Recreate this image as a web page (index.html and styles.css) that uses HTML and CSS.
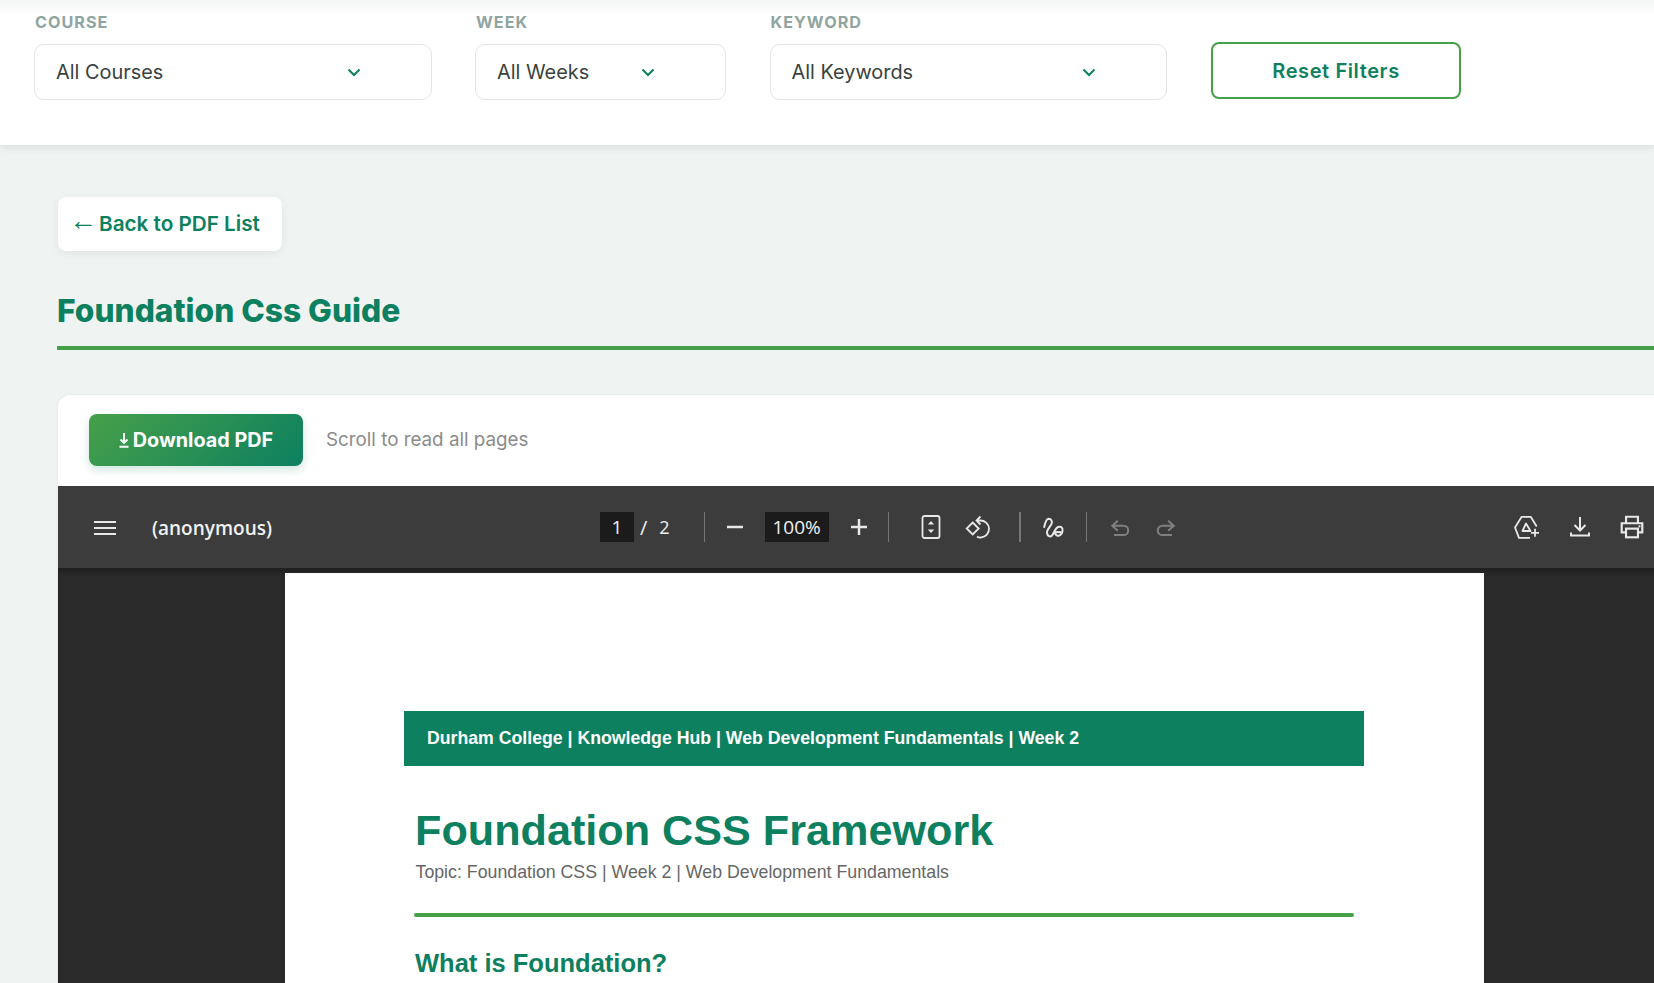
FILE: index.html
```html
<!DOCTYPE html>
<html>
<head>
	<meta charset="utf-8">
	<title>Foundation Css Guide</title>
	<link rel="stylesheet" href="styles.css">
</head>
<body>
<header class="filters">
	<div class="filter filter-course">
		<label>Course</label>
		<div class="select">All Courses
			<svg class="chevron" viewBox="0 0 14 9"><path d="M1.5 1.5 7 7l5.5-5.5"/></svg>
		</div>
	</div>
	<div class="filter filter-week">
		<label>Week</label>
		<div class="select">All Weeks
			<svg class="chevron" viewBox="0 0 14 9"><path d="M1.5 1.5 7 7l5.5-5.5"/></svg>
		</div>
	</div>
	<div class="filter filter-keyword">
		<label>Keyword</label>
		<div class="select">All Keywords
			<svg class="chevron" viewBox="0 0 14 9"><path d="M1.5 1.5 7 7l5.5-5.5"/></svg>
		</div>
	</div>
	<button class="reset">Reset Filters</button>
</header>

<main class="content">
	<a class="back" href="#"><span class="arrow">←</span>Back to PDF List</a>
	<h1 class="title">Foundation Css Guide</h1>

	<section class="card">
		<div class="card-bar">
			<a class="download" href="#">
				<svg class="dl-glyph" viewBox="0 0 10 15"><path d="M5 0v10M1.500 6.500 5 10l3.500-3.500M.5 13.800h9"/></svg>
				Download PDF
			</a>
			<span class="hint">Scroll to read all pages</span>
		</div>

		<div class="viewer">
			<div class="toolbar">
				<svg class="ico menu" viewBox="0 0 24 24"><path d="M1 18h22M1 12h22M1 6h22"/></svg>
				<span class="docname">(anonymous)</span>

				<div class="tools">
					<span class="pagebox">1</span>
					<span class="slash">/</span>
					<span class="pagecount">2</span>
					<i class="sep sep-a"></i>
					<svg class="ico minus" viewBox="0 0 24 24"><path d="M4 12h16"/></svg>
					<span class="zoombox">100%</span>
					<svg class="ico plus" viewBox="0 0 24 24"><path d="M4 12h16M12 4v16"/></svg>
					<i class="sep sep-b"></i>
					<svg class="ico fit" viewBox="0 0 24 24">
						<rect x="3.500" y="1" width="17" height="22" rx="2"/>
						<path class="solid" d="M12 6l3.200 3.600H8.800zM12 18l-3.200-3.600h6.400z"/>
					</svg>
					<svg class="ico rotate" viewBox="0 0 28 28">
						<path d="M7.700 9.500l6 6-6 6-6-6z"/>
						<path d="M12 7.500h3a8.500 8.500 0 0 1 1 17c-1.500.2-3-.2-4-1M15.500 3.500l-4 4 4 4"/>
					</svg>
					<i class="sep sep-c"></i>
					<svg class="ico draw" viewBox="0 0 24 24"><path d="M3 12.800C4 8 6 4 7.500 3.800c3 0 4 2.500 3 5C9 12 5.500 15 6 18c.5 3 3 4.500 5 2.500 2-2.500 3-7 6-8.500 3-1 5 .5 4.500 4-.5 3-3 5.500-5.500 4.500-2.500-1.200-2.500-3.500.5-3.500 1.500 0 4 .5 5.500.5"/></svg>
					<i class="sep sep-d"></i>
					<svg class="ico undo" viewBox="0 0 22 22"><path d="M8.800 4.700l-5.600 5 5.600 5M3.500 9.700h11a4.700 4.700 0 0 1 0 9.400H5"/></svg>
					<svg class="ico redo" viewBox="0 0 22 22"><path d="M13.200 4.700l5.600 5-5.600 5M18.500 9.700h-11a4.700 4.700 0 0 0 0 9.400H17"/></svg>
				</div>

				<div class="actions">
					<svg class="ico drive" viewBox="0 0 30 30">
						<path stroke-linejoin="round" d="M18 25.800H7L3 15.500 9.700 4.800h9l6 9.700"/>
						<path stroke-linejoin="round" d="M14 11.500 10.500 19H18.500z"/>
						<path d="M23 16.800v8M19 20.800h8"/>
					</svg>
					<svg class="ico save" viewBox="0 0 24 24"><path d="M12 2v13M6.500 10l5.500 5.500 5.500-5.500M3 17.500v3h18v-3"/></svg>
					<svg class="ico print" viewBox="0 0 24 24">
						<path d="M6.500 8V2.500h11V8M6.500 17H2.500V8.500h19V17h-4"/>
						<rect x="6.500" y="13.500" width="11" height="8"/>
						<path class="solid" d="M18 10.500h1.800v1.800H18z"/>
					</svg>
				</div>
			</div>

			<div class="stage">
				<article class="page">
					<div class="banner">Durham College | Knowledge Hub | Web Development Fundamentals | Week 2</div>
					<h2 class="doc-title">Foundation CSS Framework</h2>
					<p class="doc-topic">Topic: Foundation CSS | Week 2 | Web Development Fundamentals</p>
					<hr class="doc-rule">
					<h3 class="doc-heading">What is Foundation?</h3>
				</article>
			</div>
		</div>
	</section>
</main>
</body>
</html>
```

FILE: styles.css
```css
* {
  box-sizing: border-box;
}

html, body {
  margin: 0;
  height: 983px;
  overflow: hidden;
}

body {
  background: #eff4f2;
  font-family: "Inter", "Liberation Sans", sans-serif;
  color: #333;
}

/* filter bar */
.filters {
  height: 145px;
  padding: 14px 0 0 34px;
  display: flex;
  align-items: flex-start;
  background: linear-gradient(#f3f4f4, #fff 14px);
  box-shadow: 0 2px 8px rgba(0, 0, 0, .1);
}

.filter label {
  display: block;
  height: 30px;
  padding-left: 1px;
  font-size: 16.2px;
  line-height: 16px;
  font-weight: 700;
  letter-spacing: 1px;
  text-transform: uppercase;
  color: #8fa5a0;
}

.filter-course { width: 398px; margin-right: 43px; }
.filter-week { width: 250.5px; margin-right: 44px; }
.filter-keyword { width: 397.5px; margin-right: 44px; }

.select {
  height: 56px;
  padding: 0 21px;
  display: flex;
  align-items: center;
  justify-content: space-between;
  border: 1px solid #e3e6e5;
  border-radius: 10px;
  background: #fff;
  font-size: 19.9px;
  color: #3a4240;
}

.chevron {
  width: 14px;
  height: 9px;
  margin-right: 49px;
  fill: none;
  stroke: #0d8060;
  stroke-width: 2;
}

.reset {
  width: 250px;
  height: 57px;
  margin-top: 28px;
  border: 2px solid #46a049;
  border-radius: 8px;
  background: #fff;
  font-family: inherit;
  font-size: 20px;
  letter-spacing: .6px;
  font-weight: 600;
  color: #0d8060;
}

/* page content */
.content {
  width: 1710px;
  padding: 52px 0 0 58px;
}

.back {
  width: 224px;
  height: 54px;
  padding: 0 0 2px 11px;
  display: flex;
  align-items: center;
  border-radius: 8px;
  background: #fff;
  box-shadow: 0 2px 8px rgba(0, 0, 0, .07);
  font-size: 20.7px;
  font-weight: 600;
  color: #0d8060;
  text-decoration: none;
  white-space: pre;
}

.arrow {
  margin: 0 2px 4px 0;
  font-family: "Liberation Sans", sans-serif;
  font-weight: 400;
  font-size: 28px;
}

.title {
  margin: 40px 0 0 -1px;
  height: 59px;
  border-bottom: 4px solid #46a049;
  font-size: 31.7px;
  line-height: 40px;
  font-weight: 800;
  color: #0d8060;
}

.card {
  margin-top: 45px;
  border-radius: 12px 0 0 0;
  background: #fff;
  box-shadow: 0 0 3px rgba(0, 0, 0, .08);
}

.card-bar {
  height: 91px;
  padding: 19px 0 0 31px;
  display: flex;
  align-items: flex-start;
}

.download {
  width: 214px;
  height: 52px;
  display: flex;
  align-items: center;
  justify-content: center;
  gap: 4px;
  border-radius: 8px;
  background: linear-gradient(135deg, #46a049, #0d8060);
  box-shadow: 0 4px 10px rgba(13, 128, 96, .2);
  font-size: 19.8px;
  font-weight: 700;
  color: #fff;
  text-decoration: none;
}

.dl-glyph {
  width: 10px;
  height: 15px;
  fill: none;
  stroke: #fff;
  stroke-width: 1.9;
}

.hint {
  margin-left: 23px;
  font-size: 18.8px;
  line-height: 52px;
  color: #8b8b8b;
}

/* pdf viewer */
.viewer {
  background: #2a2a2a;
  font-family: "Open Sans", "Noto Sans", sans-serif;
}

.toolbar {
  height: 82px;
  display: flex;
  align-items: center;
  background: #3c3c3c;
  color: #f1f1f1;
}

.ico {
  flex: none;
  fill: none;
  stroke: #e8e8e8;
  stroke-width: 2;
}

.ico .solid {
  fill: #e8e8e8;
  stroke: none;
}

.menu { width: 24px; height: 24px; margin: 2px 0 0 35px; }

.docname {
  width: 448px;
  margin: 2px 0 0 35px;
  font-size: 19px;
  font-weight: 600;
}

.tools {
  display: flex;
  align-items: center;
}

.pagebox, .zoombox {
  height: 30px;
  display: flex;
  align-items: center;
  justify-content: center;
  background: #1b1b1b;
  font-size: 19px;
}

.pagebox { width: 34px; }
.zoombox { width: 64px; }

.slash { margin-left: 6px; font-size: 20px; }
.pagecount { margin-left: 12px; font-size: 18px; }

.sep {
  width: 1px;
  height: 30px;
  background: #777;
}

.sep-a { margin-left: 34px; }
.sep-b { margin-left: 17px; }
.sep-c { margin-left: 26px; width: 2px; }
.sep-d { margin-left: 21px; }

.minus { width: 24px; height: 24px; margin-left: 18px; stroke-width: 2.5; }
.minus + .zoombox { margin-left: 18px; }
.plus { width: 24px; height: 24px; margin-left: 18px; stroke-width: 2.5; }
.fit { width: 24px; height: 24px; margin-left: 30px; stroke-width: 1.8; }
.rotate { width: 28px; height: 28px; margin-left: 22px; stroke-width: 1.8; }
.draw { width: 24px; height: 24px; margin-left: 20px; stroke-width: 2; }
.undo { width: 22px; height: 22px; margin-left: 22px; stroke: #7f7f7f; }
.redo { width: 22px; height: 22px; margin-left: 24px; stroke: #7f7f7f; }

.actions {
  margin-left: auto;
  padding-right: 65px;
  display: flex;
  align-items: center;
  gap: 27px;
}

.drive { width: 30px; height: 30px; margin-right: -1px; stroke-width: 1.8; }
.save { width: 24px; height: 24px; }
.print { width: 26px; height: 26px; }

.stage {
  height: 500px;
  padding-top: 5px;
  padding-left: 227px;
  background: #2a2a2a;
  box-shadow: inset 0 4px 4px rgba(0, 0, 0, .25);
}

.page {
  width: 1198.5px;
  height: 600px;
  padding: 138px 119.5px 0 119px;
  background: #fff;
  font-family: "Liberation Sans", Arial, sans-serif;
}

.banner {
  height: 55px;
  padding-left: 23px;
  background: #0d8060;
  font-size: 17.7px;
  line-height: 55px;
  font-weight: 700;
  color: #fff;
}

.doc-title {
  margin: 39px 0 0 11px;
  font-size: 43.2px;
  line-height: 50px;
  font-weight: 700;
  color: #0d8060;
}

.doc-topic {
  margin: 7px 0 0 11.5px;
  font-size: 17.75px;
  line-height: 20px;
  color: #666;
}

.doc-rule {
  margin: 31px 10px 0;
  height: 4px;
  border: 0;
  border-radius: 2px;
  background: #46a049;
}

.doc-heading {
  margin: 31px 0 0 11px;
  padding-bottom: 5px;
  border-bottom: 1px solid #e4efeb;
  font-size: 25.5px;
  line-height: 30px;
  font-weight: 700;
  color: #0d8060;
}
```
